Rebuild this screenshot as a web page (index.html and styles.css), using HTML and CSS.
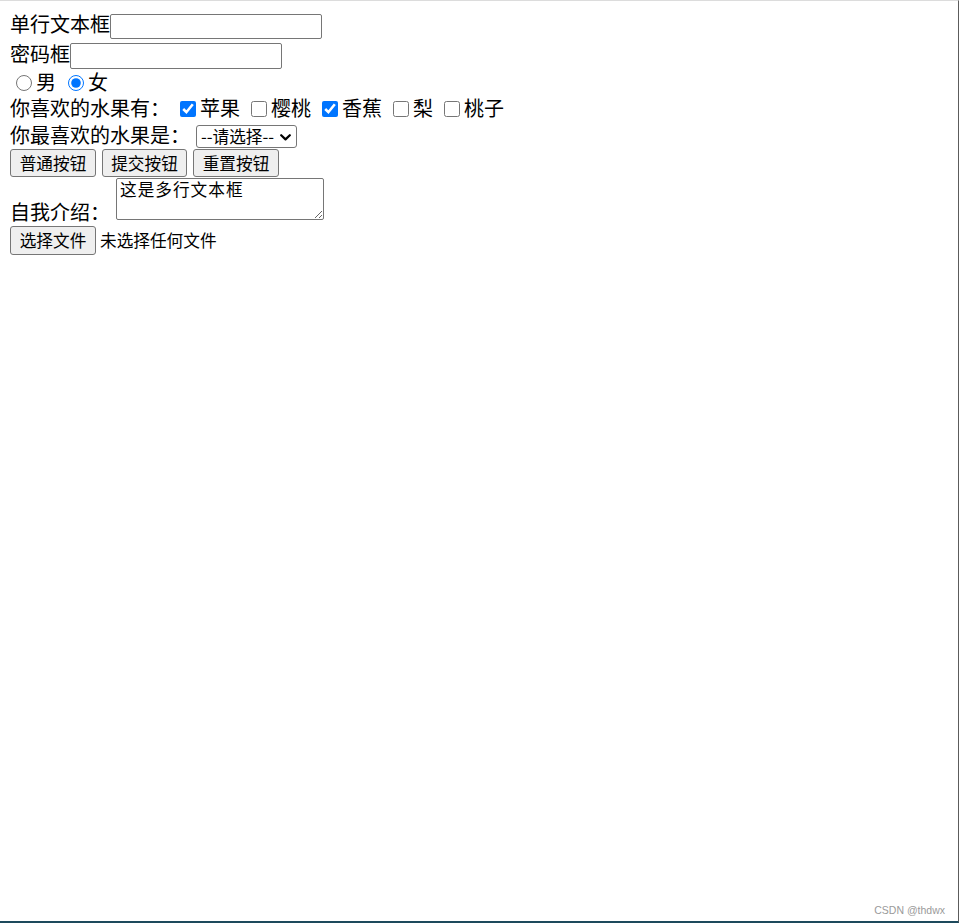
FILE: index.html
```html
<!DOCTYPE html>
<html lang="zh-CN">
<head>
<meta charset="utf-8">
<title>表单</title>
<link rel="stylesheet" href="styles.css">
</head>
<body>
<div class="screen">
  <form class="form">
    <div class="row r1">
      <span class="lbl">单行文本框</span>
      <input class="field f1" type="text">
    </div>
    <div class="row r2">
      <span class="lbl lbl-low">密码框</span>
      <input class="field f2" type="password">
    </div>
    <div class="row r3">
      <label class="opt"><input class="radio" type="radio" name="sex"><span class="lbl">男</span></label>
      <label class="opt"><input class="radio" type="radio" name="sex" checked><span class="lbl">女</span></label>
    </div>
    <div class="row r4">
      <span class="lbl lead">你喜欢的水果有：</span>
      <div class="choices">
        <label class="opt"><input class="check" type="checkbox" checked><span class="lbl">苹果</span></label>
        <label class="opt"><input class="check" type="checkbox"><span class="lbl">樱桃</span></label>
        <label class="opt"><input class="check" type="checkbox" checked><span class="lbl">香蕉</span></label>
        <label class="opt"><input class="check" type="checkbox"><span class="lbl">梨</span></label>
        <label class="opt"><input class="check" type="checkbox"><span class="lbl">桃子</span></label>
      </div>
    </div>
    <div class="row r5">
      <span class="lbl">你最喜欢的水果是：</span>
      <span class="select-wrap">
        <select class="select">
          <option>--请选择--</option>
          <option>苹果</option>
          <option>樱桃</option>
          <option>香蕉</option>
        </select>
        <svg class="chev" width="11" height="7" viewBox="0 0 11 7" aria-hidden="true"><polyline points="1.2,1.2 5.5,5.4 9.8,1.2" fill="none" stroke="#000" stroke-width="2.2" stroke-linecap="round" stroke-linejoin="round"/></svg>
      </span>
    </div>
    <div class="row r6">
      <button class="btn b86" type="button">普通按钮</button>
      <button class="btn b85" type="submit">提交按钮</button>
      <button class="btn b86" type="reset">重置按钮</button>
    </div>
    <div class="row r7">
      <span class="lbl lbl-bottom">自我介绍：</span>
      <textarea class="area">这是多行文本框</textarea>
    </div>
    <div class="row r8">
      <button class="btn b86 file-btn" type="button">选择文件</button>
      <span class="file-note">未选择任何文件</span>
    </div>
  </form>
  <div class="watermark">CSDN @thdwx</div>
</div>
</body>
</html>
```
FILE: styles.css
```css
html, body {
  margin: 0;
  padding: 0;
  background: #fff;
}

body {
  font-family: "Noto Sans CJK SC", "Noto Sans", sans-serif;
  color: #000;
}

.screen {
  position: relative;
  width: 959px;
  height: 923px;
  box-sizing: border-box;
  border-top: 1px solid #dcdcdc;
  border-right: 1px solid #5c5c5c;
  border-bottom: 2px solid #1d4a5c;
  overflow: hidden;
}

.form {
  display: flex;
  flex-direction: column;
  align-items: flex-start;
  padding: 13px 0 0 10px;
}

.row {
  display: flex;
  align-items: flex-start;
}

.lbl {
  font-size: 20px;
  line-height: 20px;
  white-space: nowrap;
}

.lbl-low {
  margin-top: 1px;
}

.field {
  box-sizing: border-box;
  width: 212px;
  margin: 0;
  padding: 1px 3px;
  border: 1px solid #767676;
  border-radius: 2px;
  background: #fff;
  font-family: inherit;
  font-size: 16.67px;
}

.f1 { height: 25px; }
.f2 { height: 26px; }

.r2 { margin-top: 4px; }

.r3 {
  margin-top: 3px;
  padding-left: 6px;
  gap: 12px;
}

.opt {
  display: flex;
  align-items: flex-start;
  gap: 4px;
}

.radio {
  width: 16px;
  height: 16px;
  margin: 3px 0 0 0;
}

.r4 { margin-top: 6px; }

.lead { margin-right: 10px; }

.choices {
  display: flex;
  gap: 11px;
}

.check {
  width: 16px;
  height: 16px;
  margin: 3px 0 0 0;
}

.r5 {
  margin-top: 7px;
  gap: 6px;
}

.select-wrap {
  position: relative;
  display: inline-flex;
}

.select {
  -webkit-appearance: none;
  appearance: none;
  box-sizing: border-box;
  width: 101px;
  height: 23px;
  margin: 0;
  padding: 0 0 0 4px;
  border: 1px solid #767676;
  border-radius: 3px;
  background: #fff;
  color: #000;
  font-family: inherit;
  font-size: 16.67px;
  line-height: 21px;
}

.chev {
  position: absolute;
  right: 6px;
  top: 9px;
  pointer-events: none;
}

.r6 {
  margin-top: 1px;
  gap: 6px;
}

.btn {
  box-sizing: border-box;
  display: flex;
  align-items: center;
  justify-content: center;
  height: 28px;
  margin: 0;
  padding: 0;
  border: 1px solid #767676;
  border-radius: 3px;
  background: #efefef;
  color: #000;
  font-family: inherit;
  font-size: 16.67px;
  line-height: 1;
}

.b86 { width: 86px; }
.b85 { width: 85px; }

.r7 {
  margin-top: 1px;
  gap: 6px;
}

.lbl-bottom { margin-top: 24px; }

.area {
  box-sizing: border-box;
  width: 208px;
  height: 42px;
  margin: 0;
  padding: 0 3px;
  border: 1px solid #767676;
  border-radius: 2px;
  background: #fff;
  color: #000;
  font-family: "Noto Sans CJK SC", sans-serif;
  font-size: 16.67px;
  line-height: 20px;
  letter-spacing: 1px;
}

.r8 {
  margin-top: 4px;
  gap: 4px;
}

.file-btn { height: 29px; }

.file-note {
  font-size: 16.67px;
  line-height: 29px;
  white-space: nowrap;
}

.watermark {
  position: absolute;
  right: 13px;
  bottom: 5px;
  font-family: "Liberation Sans", Arial, sans-serif;
  font-size: 10.5px;
  color: #9a9a9a;
}
```
